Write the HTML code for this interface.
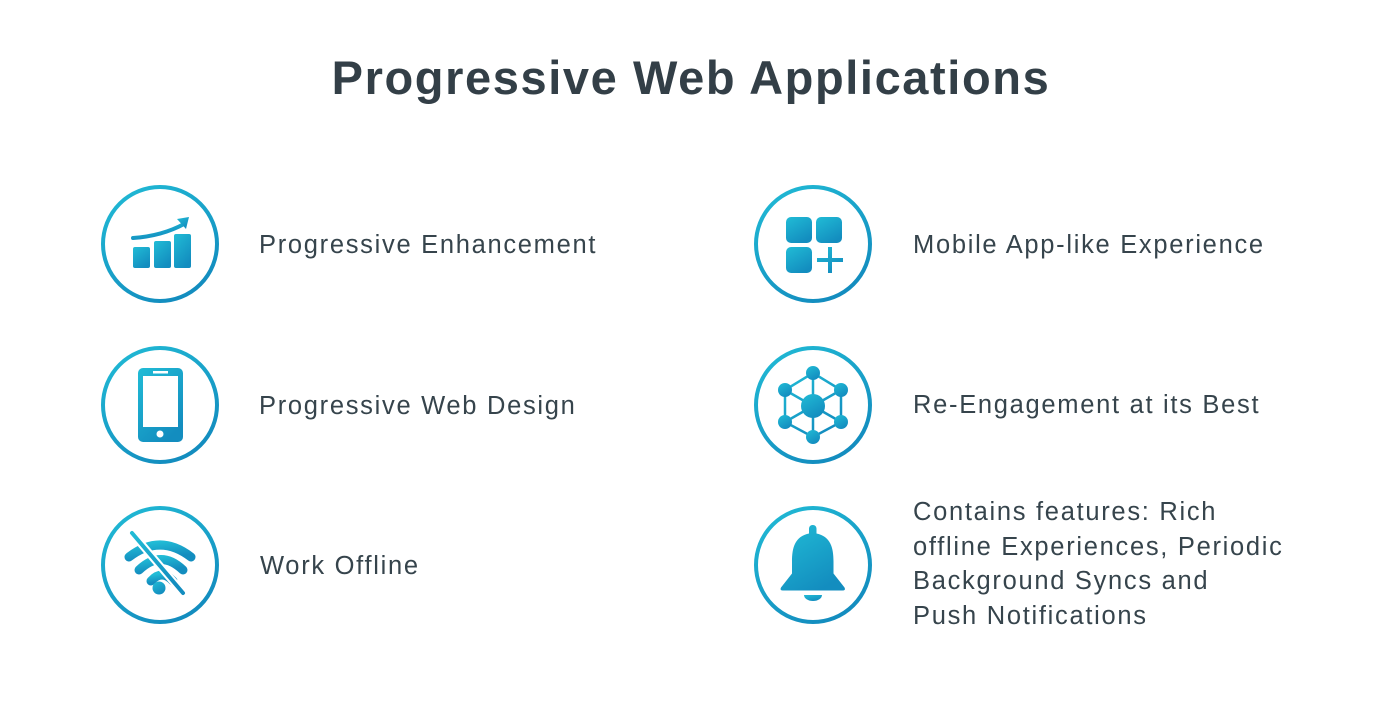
<!DOCTYPE html>
<html><head><style>
body{margin:0;width:1382px;height:711px;background:#fff;font-family:"Liberation Sans",sans-serif;color:#36444c;position:relative;overflow:hidden}
h1{position:absolute;top:50px;left:0;width:1382px;text-align:center;margin:0;font-size:47px;font-weight:bold;color:#333f47;letter-spacing:1.6px}
.t{position:absolute;font-size:25.5px;letter-spacing:1.7px;line-height:34.5px}
svg{position:absolute}
</style></head><body>
<svg width="0" height="0" style="position:absolute"><defs>
<linearGradient id="g" x1="0" y1="0" x2="0.6" y2="1"><stop offset="0" stop-color="#21bcd6"/><stop offset="1" stop-color="#138dbf"/></linearGradient>
</defs></svg>
<h1>Progressive Web Applications</h1>

<svg style="left:100px;top:184px" width="120" height="120" viewBox="0 0 120 120"><circle cx="60" cy="60" r="57" fill="none" stroke="url(#g)" stroke-width="4"/>
<rect x="33" y="63" width="17" height="21" rx="2" fill="url(#g)"/><rect x="54" y="57" width="17" height="27" rx="2" fill="url(#g)"/><rect x="74" y="50" width="17" height="34" rx="2" fill="url(#g)"/>
<path d="M33 54 Q62 52 84 40" fill="none" stroke="url(#g)" stroke-width="4" stroke-linecap="round"/><path d="M77 35 L89 33 L86 45 Z" fill="url(#g)"/></svg>

<svg style="left:100px;top:345px" width="120" height="120" viewBox="0 0 120 120"><circle cx="60" cy="60" r="57" fill="none" stroke="url(#g)" stroke-width="4"/>
<rect x="38" y="23" width="45" height="74" rx="5" fill="url(#g)"/><rect x="43" y="31" width="35" height="51" fill="#fff"/><rect x="53" y="26" width="15" height="2.5" fill="#fff"/><circle cx="60" cy="89" r="3.5" fill="#fff"/></svg>

<svg style="left:100px;top:505px" width="120" height="120" viewBox="0 0 120 120"><circle cx="60" cy="60" r="57" fill="none" stroke="url(#g)" stroke-width="4"/>
<g fill="none" stroke="url(#g)" stroke-width="9" stroke-linecap="round"><path d="M29 52 Q60 28 91 52"/><path d="M39 65 Q61 44 83 65"/><path d="M51 76 Q62 64 73 76"/></g>
<circle cx="59" cy="83" r="6.5" fill="url(#g)"/><path d="M32 28 L83 88" stroke="#fff" stroke-width="8"/><path d="M32 28 L83 88" stroke="url(#g)" stroke-width="4" stroke-linecap="round"/></svg>

<svg style="left:753px;top:184px" width="120" height="120" viewBox="0 0 120 120"><circle cx="60" cy="60" r="57" fill="none" stroke="url(#g)" stroke-width="4"/>
<rect x="33" y="33" width="26" height="26" rx="5" fill="url(#g)"/><rect x="63" y="33" width="26" height="26" rx="5" fill="url(#g)"/><rect x="33" y="63" width="26" height="26" rx="5" fill="url(#g)"/>
<path d="M64 76 H90 M77 63 V89" stroke="url(#g)" stroke-width="4"/></svg>

<svg style="left:753px;top:345px" width="120" height="120" viewBox="0 0 120 120"><circle cx="60" cy="60" r="57" fill="none" stroke="url(#g)" stroke-width="4"/>
<g stroke="url(#g)" stroke-width="2.5" fill="none"><path d="M60 28 L88 45 L88 77 L60 92 L32 77 L32 45 Z"/><path d="M60 28 L60 92 M32 45 L88 77 M88 45 L32 77"/></g>
<g fill="url(#g)"><circle cx="60" cy="28" r="7"/><circle cx="88" cy="45" r="7"/><circle cx="88" cy="77" r="7"/><circle cx="60" cy="92" r="7"/><circle cx="32" cy="77" r="7"/><circle cx="32" cy="45" r="7"/><circle cx="60" cy="61" r="12"/></g></svg>

<svg style="left:753px;top:505px" width="120" height="120" viewBox="0 0 120 120"><circle cx="60" cy="60" r="57" fill="none" stroke="url(#g)" stroke-width="4"/>
<path d="M60 20 a3.5 3.5 0 0 1 3.5 3.5 v5 c14 3 17 14 17 28 v12 l11 14 q1.5 3 -2 3 H30 q-3.5 0 -2 -3 l11 -14 v-12 c0 -14 3 -25 17 -28 v-5 a3.5 3.5 0 0 1 3.5 -3.5 z" fill="url(#g)"/>
<path d="M51 90 h18 a9 6 0 0 1 -18 0 z" fill="url(#g)"/></svg>

<div class="t" style="left:259px;top:228px">Progressive Enhancement</div>
<div class="t" style="left:259px;top:389px">Progressive Web Design</div>
<div class="t" style="left:260px;top:549px">Work Offline</div>
<div class="t" style="left:913px;top:228px">Mobile App-like Experience</div>
<div class="t" style="left:913px;top:388px">Re-Engagement at its Best</div>
<div class="t" style="left:913px;top:495px">Contains features: Rich<br>offline Experiences, Periodic<br>Background Syncs and<br>Push Notifications</div>
</body></html>
